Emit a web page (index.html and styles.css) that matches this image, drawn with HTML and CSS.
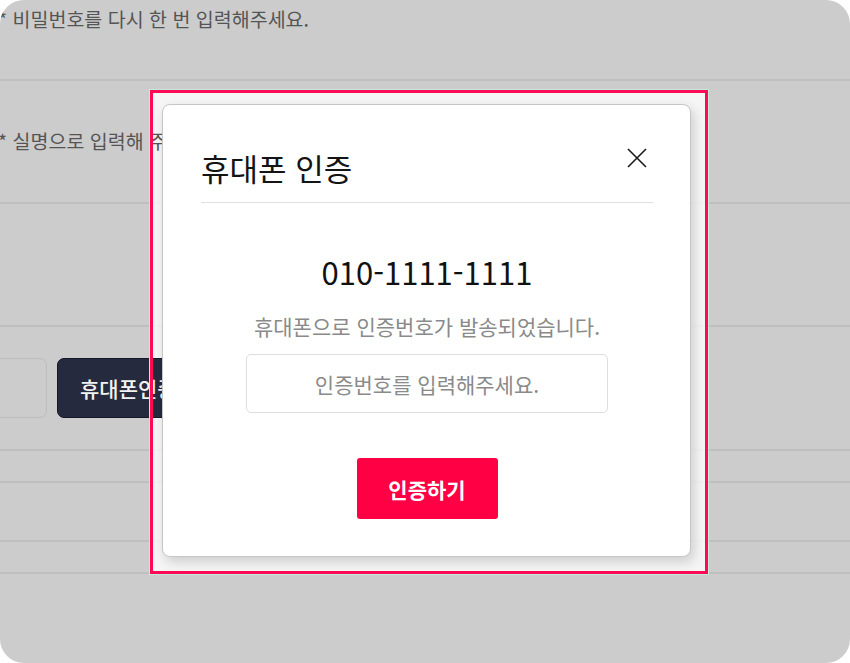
FILE: index.html
```html
<!DOCTYPE html>
<html lang="ko">
<head>
<meta charset="utf-8">
<title>휴대폰 인증</title>
<link rel="stylesheet" href="styles.css">
</head>
<body>
<div class="frame">
  <div class="form">
    <div class="row row-1"><p class="hint">* 비밀번호를 다시 한 번 입력해주세요.</p></div>
    <div class="row row-2"><p class="hint">* 실명으로 입력해 주세요.</p></div>
    <div class="row row-3"></div>
    <div class="row row-4">
      <div class="field"></div>
      <button class="auth-btn" type="button">휴대폰인증</button>
    </div>
    <div class="row row-5"></div>
    <div class="row row-6"></div>
    <div class="row row-7"></div>
  </div>

  <div class="veil"></div>

  <div class="highlight">
    <div class="modal">
      <div class="modal-head">
        <h2 class="modal-title">휴대폰 인증</h2>
        <button class="close" type="button" aria-label="닫기">
          <svg viewBox="0 0 20 20" width="20" height="20"><path d="M1 1 L19 19 M19 1 L1 19" stroke="#1a1a1a" stroke-width="1.6" fill="none"/></svg>
        </button>
      </div>
      <div class="modal-body">
        <div class="phone">010-1111-1111</div>
        <p class="sent">휴대폰으로 인증번호가 발송되었습니다.</p>
        <div class="code-input">인증번호를 입력해주세요.</div>
        <button class="confirm" type="button">인증하기</button>
      </div>
    </div>
  </div>
</div>
</body>
</html>
```

FILE: styles.css
```css
html, body {
  margin: 0;
  padding: 0;
  background: #ffffff;
}

.frame {
  position: relative;
  width: 850px;
  height: 663px;
  background: #cccccc;
  border-radius: 24px;
  overflow: hidden;
  font-family: "Noto Sans CJK KR", "Noto Sans", sans-serif;
}

.form {
  display: flex;
  flex-direction: column;
}

.row {
  box-sizing: border-box;
  border-bottom: 2px solid #bfbfbf;
}

.row-1 { height: 81px; padding-top: 5px; }
.row-2 { height: 123px; padding-top: 46px; }
.row-3 { height: 123px; }
.row-4 {
  height: 124px;
  padding-top: 31px;
  display: flex;
  align-items: flex-start;
  gap: 10px;
}
.row-5 { height: 32px; }
.row-6 { height: 59px; }
.row-7 { height: 32px; }

.hint {
  position: relative;
  z-index: 2;
  margin: 0 0 0 -2px;
  font-size: 19.5px;
  line-height: 28px;
  color: #555555;
  white-space: nowrap;
}

.field {
  box-sizing: border-box;
  width: 60px;
  height: 60px;
  margin-left: -13px;
  border: 1px solid #bdbdbd;
  border-radius: 7px;
}

.auth-btn {
  position: relative;
  z-index: 2;
  box-sizing: border-box;
  width: 140px;
  height: 60px;
  padding: 0 0 0 22px;
  text-align: left;
  background: #262a3e;
  border: 1px solid #151826;
  border-radius: 7px;
  color: #f2f2f2;
  font-family: "Noto Sans CJK KR", sans-serif;
  font-size: 21px;
  font-weight: 500;
  white-space: nowrap;
}

.veil {
  position: absolute;
  z-index: 1;
  left: 150px;
  top: 90px;
  width: 558px;
  height: 484px;
  background: rgba(255, 255, 255, 0.8);
}

.highlight {
  position: absolute;
  z-index: 3;
  left: 150px;
  top: 90px;
  box-sizing: border-box;
  width: 558px;
  height: 484px;
  padding: 11px 14px 14px 9px;
  border: 3px solid #ff0a55;
  box-shadow: 0 0 0 1px #c4e8dc;
}

.modal {
  position: relative;
  box-sizing: border-box;
  width: 529px;
  height: 453px;
  background: #ffffff;
  border: 1px solid #c6c6c6;
  border-radius: 8px;
  box-shadow: 3px 5px 12px rgba(0, 0, 0, 0.16);
  padding: 0 37px 0 38px;
}

.modal-head {
  height: 98px;
  box-sizing: border-box;
  padding-top: 42px;
  border-bottom: 1px solid #e0e0e0;
}

.modal-title {
  margin: 0;
  font-size: 31px;
  line-height: 42px;
  font-weight: 400;
  color: #141414;
}

.close {
  position: absolute;
  top: 43px;
  right: 43px;
  width: 20px;
  height: 20px;
  padding: 0;
  border: 0;
  background: none;
  display: flex;
}

.modal-body {
  display: flex;
  flex-direction: column;
  align-items: center;
}

.phone {
  margin-top: 48px;
  font-size: 31px;
  line-height: 42px;
  color: #111111;
}

.sent {
  margin: 19px 0 0;
  font-size: 21px;
  line-height: 28px;
  color: #8a8a8a;
}

.code-input {
  box-sizing: border-box;
  margin-top: 14px;
  width: 362px;
  height: 59px;
  border: 1px solid #dedede;
  border-radius: 5px;
  display: flex;
  align-items: center;
  justify-content: center;
  font-size: 21px;
  color: #8a8a8a;
}

.confirm {
  margin-top: 45px;
  width: 141px;
  height: 61px;
  border: 0;
  border-radius: 3px;
  background: #ff0044;
  color: #ffffff;
  font-family: "Noto Sans CJK KR", sans-serif;
  font-size: 21px;
  font-weight: 700;
}
```
